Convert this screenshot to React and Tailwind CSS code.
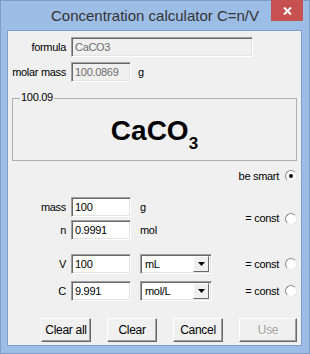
import React from 'react';

const font = { fontFamily: '"Liberation Sans", Arial, sans-serif' };

const sunken =
  'border border-t-[#a0a0a0] border-l-[#a0a0a0] border-r-white border-b-white shadow-[inset_1px_1px_0_#696969,inset_-1px_-1px_0_#e3e3e3]';

const Field = ({ value, disabled, className = '' }) => (
  <div
    className={`${sunken} h-[20px] flex items-center pl-[3px] ${disabled ? 'bg-[#f0f0f0] text-[#6d6d6d]' : 'bg-white text-black'} ${className}`}
  >
    {value}
  </div>
);

const Radio = ({ checked }) => (
  <div className="w-[12px] h-[12px] rounded-full bg-white border border-t-[#8a8a8a] border-l-[#8a8a8a] border-r-[#e8e8e8] border-b-[#e8e8e8] flex items-center justify-center shrink-0">
    {checked && <div className="w-[4px] h-[4px] rounded-full bg-black" />}
  </div>
);

const Select = ({ value }) => (
  <div className={`${sunken} bg-white h-[20px] w-[72px] flex items-center justify-between pl-[4px] pr-[2px]`}>
    <span>{value}</span>
    <div className="w-[16px] h-[16px] bg-[#f0f0f0] border border-t-white border-l-white border-r-[#696969] border-b-[#696969] flex items-center justify-center">
      <svg width="7" height="4" viewBox="0 0 7 4">
        <path d="M0 0h7L3.5 4z" fill="#000" />
      </svg>
    </div>
  </div>
);

const Button = ({ label, disabled, className = 'w-[50px]' }) => (
  <div
    className={`h-[24px] ${className} bg-[#f0f0f0] border border-t-white border-l-white border-r-[#696969] border-b-[#696969] shadow-[inset_-1px_-1px_0_#a0a0a0] flex items-center justify-center ${disabled ? 'text-[#a0a0a0] [text-shadow:1px_1px_0_#fff]' : 'text-black'}`}
  >
    {label}
  </div>
);

const Label = ({ children }) => (
  <div className="w-[58px] text-right shrink-0">{children}</div>
);

const Const = () => (
  <div className="ml-auto flex items-center gap-[6px] pr-[4px]">
    <span>= const</span>
    <Radio />
  </div>
);

export default function App() {
  return (
    <div
      className="w-[310px] h-[354px] bg-[#9cbde6] border border-[#7e9cc4] flex flex-col text-[11px] tracking-[-0.3px] leading-none text-black"
      style={font}
    >
      <div className="h-[29px] relative flex items-center justify-center shrink-0">
        <span className="text-[15px] tracking-normal text-[#333] pb-[1px]">Concentration calculator C=n/V</span>
        <div className="absolute top-[-1px] right-[6px] w-[32px] h-[21px] bg-[#c75050] flex items-center justify-center">
          <svg width="9" height="8" viewBox="0 0 9 8">
            <path d="M1 0.5l7 7M8 0.5l-7 7" stroke="#fff" strokeWidth="2" />
          </svg>
        </div>
      </div>

      <div className="ml-[6px] mr-[7px] h-[316px] border border-[#7f9dc5] bg-[#f0f0f0] flex flex-col">
        <div className="flex items-center mt-[6px] h-[20px]">
          <Label>formula</Label>
          <Field value="CaCO3" disabled className="ml-[5px] w-[182px]" />
        </div>
        <div className="flex items-center mt-[5px] h-[20px]">
          <Label>molar mass</Label>
          <Field value="100.0869" disabled className="ml-[5px] w-[60px]" />
          <span className="ml-[7px]">g</span>
        </div>

        <div className="relative ml-[4px] mt-[16px] w-[285px] h-[63px] border border-[#b0b0b0] flex items-center justify-center">
          <span className="absolute left-[7px] top-[-7px] px-[1px] bg-[#f0f0f0]">100.09</span>
          <div className="font-bold text-[28px] tracking-normal mt-[3px]">
            CaCO<sub className="text-[17px] align-[-5px]">3</sub>
          </div>
        </div>

        <div className="flex items-center justify-end gap-[6px] pr-[4px] mt-[9px] h-[12px]">
          <span>be smart</span>
          <Radio checked />
        </div>

        <div className="flex items-center mt-[15px]">
          <div className="flex flex-col">
            <div className="flex items-center h-[20px]">
              <Label>mass</Label>
              <Field value="100" className="ml-[5px] w-[60px]" />
              <span className="ml-[9px]">g</span>
            </div>
            <div className="flex items-center h-[20px] mt-[3px]">
              <Label>n</Label>
              <Field value="0.9991" className="ml-[5px] w-[60px]" />
              <span className="ml-[9px]">mol</span>
            </div>
          </div>
          <Const />
        </div>

        <div className="flex items-center h-[20px] mt-[14px]">
          <Label>V</Label>
          <Field value="100" className="ml-[5px] w-[60px]" />
          <div className="ml-[9px]">
            <Select value="mL" />
          </div>
          <Const />
        </div>
        <div className="flex items-center h-[20px] mt-[7px]">
          <Label>C</Label>
          <Field value="9.991" className="ml-[5px] w-[60px]" />
          <div className="ml-[9px]">
            <Select value="mol/L" />
          </div>
          <Const />
        </div>

        <div className="flex items-center gap-[16px] pl-[33px] mt-[17px] text-[12px]">
          <Button label="Clear all" />
          <Button label="Clear" />
          <Button label="Cancel" />
          <Button label="Use" disabled className="w-[58px]" />
        </div>
      </div>
    </div>
  );
}
